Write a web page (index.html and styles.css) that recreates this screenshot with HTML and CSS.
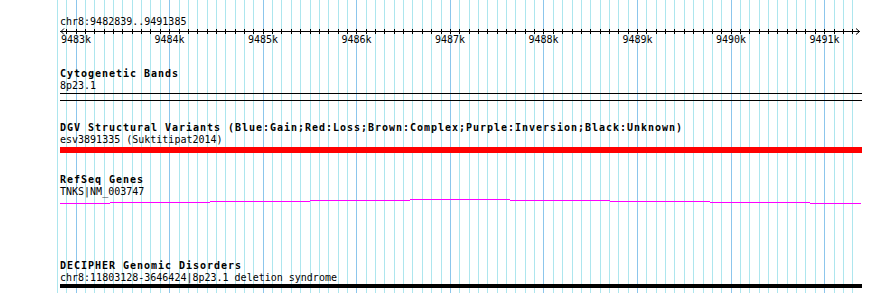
FILE: index.html
```html
<!DOCTYPE html>
<html lang="en">
<head>
<meta charset="utf-8">
<title>Genome browser</title>
<link rel="stylesheet" href="styles.css">
</head>
<body>
<div class="browser">
  <svg class="grid" width="890" height="293" viewBox="0 0 890 293" aria-hidden="true">
    <path class="grid-minor" d="M57.5 0V293M66.5 0V293M85.5 0V293M94.5 0V293M104.5 0V293M113.5 0V293M122.5 0V293M132.5 0V293M141.5 0V293M150.5 0V293M160.5 0V293M179.5 0V293M188.5 0V293M197.5 0V293M207.5 0V293M216.5 0V293M225.5 0V293M235.5 0V293M244.5 0V293M253.5 0V293M272.5 0V293M281.5 0V293M291.5 0V293M300.5 0V293M310.5 0V293M319.5 0V293M328.5 0V293M338.5 0V293M347.5 0V293M366.5 0V293M375.5 0V293M384.5 0V293M394.5 0V293M403.5 0V293M412.5 0V293M422.5 0V293M431.5 0V293M441.5 0V293M459.5 0V293M469.5 0V293M478.5 0V293M487.5 0V293M497.5 0V293M506.5 0V293M515.5 0V293M525.5 0V293M534.5 0V293M553.5 0V293M562.5 0V293M572.5 0V293M581.5 0V293M590.5 0V293M600.5 0V293M609.5 0V293M618.5 0V293M628.5 0V293M646.5 0V293M656.5 0V293M665.5 0V293M674.5 0V293M684.5 0V293M693.5 0V293M703.5 0V293M712.5 0V293M721.5 0V293M740.5 0V293M749.5 0V293M759.5 0V293M768.5 0V293M777.5 0V293M787.5 0V293M796.5 0V293M805.5 0V293M815.5 0V293M834.5 0V293M843.5 0V293M852.5 0V293"/>
    <path class="grid-major" d="M76.5 0V293M169.5 0V293M263.5 0V293M356.5 0V293M450.5 0V293M543.5 0V293M637.5 0V293M731.5 0V293M824.5 0V293"/>
  </svg>

  <div class="content">
    <div class="locus">chr8:9482839..9491385</div>

    <svg class="ruler" width="810" height="18" viewBox="60 28 810 18" aria-label="ruler">
      <path class="ruler-line" d="M60 31.5H860M64 28.5L61 31.5L64 34.5M856 28.5L859.5 31.5L856 34.5"/>
      <path class="ruler-ticks" d="M66.5 29V34M76.5 29V34M85.5 29V34M94.5 29V34M104.5 29V34M113.5 29V34M122.5 29V34M132.5 29V34M141.5 29V34M150.5 29V34M160.5 29V34M169.5 29V34M179.5 29V34M188.5 29V34M197.5 29V34M207.5 29V34M216.5 29V34M225.5 29V34M235.5 29V34M244.5 29V34M253.5 29V34M263.5 29V34M272.5 29V34M281.5 29V34M291.5 29V34M300.5 29V34M310.5 29V34M319.5 29V34M328.5 29V34M338.5 29V34M347.5 29V34M356.5 29V34M366.5 29V34M375.5 29V34M384.5 29V34M394.5 29V34M403.5 29V34M412.5 29V34M422.5 29V34M431.5 29V34M441.5 29V34M450.5 29V34M459.5 29V34M469.5 29V34M478.5 29V34M487.5 29V34M497.5 29V34M506.5 29V34M515.5 29V34M525.5 29V34M534.5 29V34M543.5 29V34M553.5 29V34M562.5 29V34M572.5 29V34M581.5 29V34M590.5 29V34M600.5 29V34M609.5 29V34M618.5 29V34M628.5 29V34M637.5 29V34M646.5 29V34M656.5 29V34M665.5 29V34M674.5 29V34M684.5 29V34M693.5 29V34M703.5 29V34M712.5 29V34M721.5 29V34M731.5 29V34M740.5 29V34M749.5 29V34M759.5 29V34M768.5 29V34M777.5 29V34M787.5 29V34M796.5 29V34M805.5 29V34M815.5 29V34M824.5 29V34M834.5 29V34M843.5 29V34M852.5 29V34"/>
      <text class="ruler-label" x="76" y="43">9483k</text>
      <text class="ruler-label" x="169.5" y="43">9484k</text>
      <text class="ruler-label" x="263" y="43">9485k</text>
      <text class="ruler-label" x="356.5" y="43">9486k</text>
      <text class="ruler-label" x="450" y="43">9487k</text>
      <text class="ruler-label" x="543.5" y="43">9488k</text>
      <text class="ruler-label" x="637.5" y="43">9489k</text>
      <text class="ruler-label" x="731" y="43">9490k</text>
      <text class="ruler-label" x="824.5" y="43">9491k</text>
    </svg>

    <div class="tracks">
      <section class="track">
        <div class="track-title">Cytogenetic Bands</div>
        <div class="track-label">8p23.1</div>
        <div class="band"></div>
      </section>

      <section class="track">
        <div class="track-title">DGV Structural Variants (Blue:Gain;Red:Loss;Brown:Complex;Purple:Inversion;Black:Unknown)</div>
        <div class="track-label">esv3891335 (Suktitipat2014)</div>
        <div class="variant-bar"></div>
      </section>

      <section class="track">
        <div class="track-title">RefSeq Genes</div>
        <div class="track-label">TNKS|NM_003747</div>
        <svg class="gene" width="802" height="41" viewBox="60 198 802 41" aria-hidden="true">
          <path class="gene-line" d="M60 203.5H110M110 202.5H210M210 201.5H310M310 200.5H410M410 199.5H510M510 200.5H610M610 201.5H710M710 202.5H810M810 203.5H861"/>
        </svg>
      </section>

      <section class="track">
        <div class="track-title">DECIPHER Genomic Disorders</div>
        <div class="track-label">chr8:11803128-3646424|8p23.1 deletion syndrome</div>
        <div class="disorder-bar"></div>
      </section>
    </div>
  </div>
</div>
</body>
</html>
```

FILE: styles.css
```css
html, body {
  margin: 0;
  padding: 0;
  background: #ffffff;
}

body {
  font-family: "DejaVu Sans Mono", "Liberation Mono", monospace;
  font-size: 10px;
  color: #000000;
}

.browser {
  position: relative;
  width: 890px;
  height: 293px;
  overflow: hidden;
  background: #ffffff;
}

.grid {
  position: absolute;
  top: 0;
  left: 0;
  display: block;
}

.grid-minor {
  stroke: #ade6ee;
  stroke-width: 1;
  fill: none;
  shape-rendering: crispEdges;
}

.grid-major {
  stroke: #8cc6ec;
  stroke-width: 1;
  fill: none;
  shape-rendering: crispEdges;
}

.content {
  position: relative;
  padding: 16px 0 0 60px;
}

.locus {
  line-height: 12px;
  height: 12px;
  white-space: nowrap;
}

.ruler {
  display: block;
  overflow: visible;
}

.ruler-line {
  stroke: #000000;
  stroke-width: 1;
  fill: none;
}

.ruler-ticks {
  stroke: #000000;
  stroke-width: 1;
  fill: none;
  shape-rendering: crispEdges;
}

.ruler-label {
  font-family: "DejaVu Sans Mono", "Liberation Mono", monospace;
  font-size: 10px;
  fill: #000000;
  text-anchor: middle;
}

.tracks {
  display: flex;
  flex-direction: column;
  gap: 21px;
  margin-top: 22px;
}

.track {
  display: flex;
  flex-direction: column;
}

.track-title {
  font-weight: bold;
  letter-spacing: 0.98px;
  line-height: 12px;
  height: 12px;
  white-space: nowrap;
}

.track-label {
  line-height: 12px;
  height: 12px;
  white-space: nowrap;
}

.band {
  margin-top: 1px;
  width: 802px;
  height: 6px;
  border-top: 1px solid #000000;
  border-bottom: 1px solid #000000;
}

.variant-bar {
  margin-top: 1px;
  width: 802px;
  height: 6px;
  background: #ff0000;
}

.gene {
  display: block;
}

.gene-line {
  stroke: #ff00ff;
  stroke-width: 1;
  fill: none;
  shape-rendering: crispEdges;
}

.disorder-bar {
  width: 802px;
  height: 4px;
  background: #000000;
}
```
